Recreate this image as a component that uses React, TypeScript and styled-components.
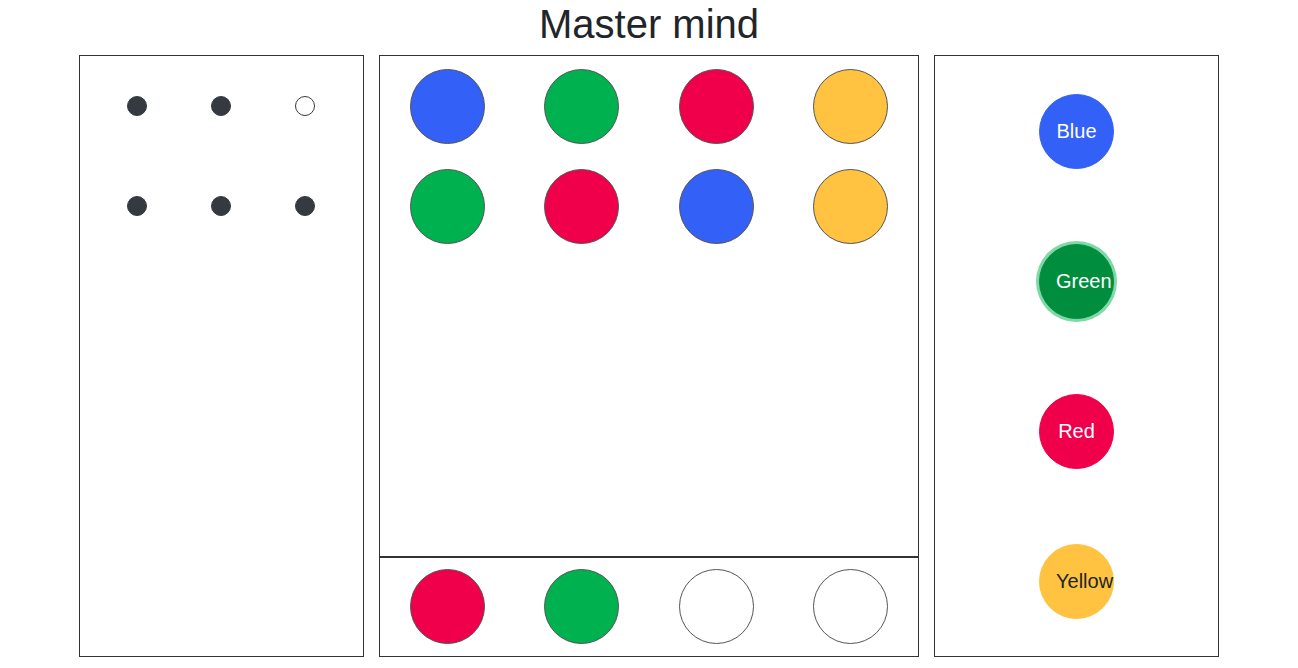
import React from 'react'
import styled, { createGlobalStyle } from 'styled-components'

const GlobalStyle = createGlobalStyle`
  body {
    margin: 0;
    background: #fff;
    font-family: "Liberation Sans", Arial, sans-serif;
    color: #212529;
  }
`

const COLORS: Record<string, string> = {
  blue: '#3360f6',
  green: '#00b24f',
  red: '#f0004a',
  yellow: '#ffc341',
}

const Page = styled.div`
  width: 1140px;
  margin: 0 auto;
`

const Title = styled.h1`
  margin: 0 0 7px;
  font-size: 40px;
  font-weight: 400;
  line-height: 48px;
  text-align: center;
`

const Board = styled.div`
  display: flex;
  gap: 15px;
`

const Panel = styled.div<{ $width: number }>`
  width: ${({ $width }) => $width}px;
  height: 602px;
  box-sizing: border-box;
  border: 1px solid #333;
  display: flex;
  flex-direction: column;
`

const History = styled.div`
  height: 500px;
  border-bottom: 2px solid #333;
`

const Row = styled.div<{ $height?: number }>`
  display: grid;
  grid-template-columns: repeat(4, 1fr);
  height: ${({ $height }) => $height ?? 100}px;
  align-items: center;
  justify-items: center;
`

const Peg = styled.div<{ $color?: string }>`
  width: 75px;
  height: 75px;
  box-sizing: border-box;
  border-radius: 50%;
  border: 1px solid #555;
  background: ${({ $color }) => ($color ? COLORS[$color] : '#fff')};
`

const HintRow = styled.div`
  display: grid;
  grid-template-columns: repeat(3, 84px);
  padding-left: 15px;
  justify-items: center;
  align-items: center;
  height: 100px;
`

const Hint = styled.div<{ $filled: boolean }>`
  width: 20px;
  height: 20px;
  box-sizing: border-box;
  border-radius: 50%;
  border: 1px solid #343a40;
  background: ${({ $filled }) => ($filled ? '#343a40' : '#fff')};
`

const Palette = styled.div`
  display: flex;
  flex-direction: column;
`

const PaletteSlot = styled.div`
  height: 150px;
  display: flex;
  align-items: center;
  justify-content: center;
`

const ColorButton = styled.button<{ $color: string; $active?: boolean }>`
  width: 75px;
  height: 75px;
  border-radius: 50%;
  padding: 8px 16px;
  border: 1px solid ${({ $color }) => COLORS[$color]};
  background: ${({ $color }) => COLORS[$color]};
  color: ${({ $color }) => ($color === 'yellow' ? '#212529' : '#fff')};
  font-family: "Liberation Sans", Arial, sans-serif;
  font-size: 20px;
  line-height: 30px;
  white-space: nowrap;
  text-align: center;
  cursor: pointer;
  ${({ $active }) =>
    $active &&
    `
    background: #008e3e;
    border-color: #008e3e;
    box-shadow: 0 0 0 3px #7fd8a6;
  `}
`

const hints = [
  [true, true, false],
  [true, true, true],
]

const guesses = [
  ['blue', 'green', 'red', 'yellow'],
  ['green', 'red', 'blue', 'yellow'],
]

const current = ['red', 'green', undefined, undefined]

const palette = [
  { key: 'blue', label: 'Blue' },
  { key: 'green', label: 'Green', active: true },
  { key: 'red', label: 'Red' },
  { key: 'yellow', label: 'Yellow' },
]

export default function App() {
  return (
    <Page>
      <GlobalStyle />
      <Title>Master mind</Title>
      <Board>
        <Panel $width={285}>
          {hints.map((row, i) => (
            <HintRow key={i}>
              {row.map((filled, j) => (
                <Hint key={j} $filled={filled} />
              ))}
            </HintRow>
          ))}
        </Panel>
        <Panel $width={540}>
          <History>
            {guesses.map((row, i) => (
              <Row key={i}>
                {row.map((c, j) => (
                  <Peg key={j} $color={c} />
                ))}
              </Row>
            ))}
          </History>
          <Row $height={97}>
            {current.map((c, j) => (
              <Peg key={j} $color={c} />
            ))}
          </Row>
        </Panel>
        <Panel $width={285}>
          <Palette>
            {palette.map((p) => (
              <PaletteSlot key={p.key}>
                <ColorButton $color={p.key} $active={p.active}>
                  {p.label}
                </ColorButton>
              </PaletteSlot>
            ))}
          </Palette>
        </Panel>
      </Board>
    </Page>
  )
}
